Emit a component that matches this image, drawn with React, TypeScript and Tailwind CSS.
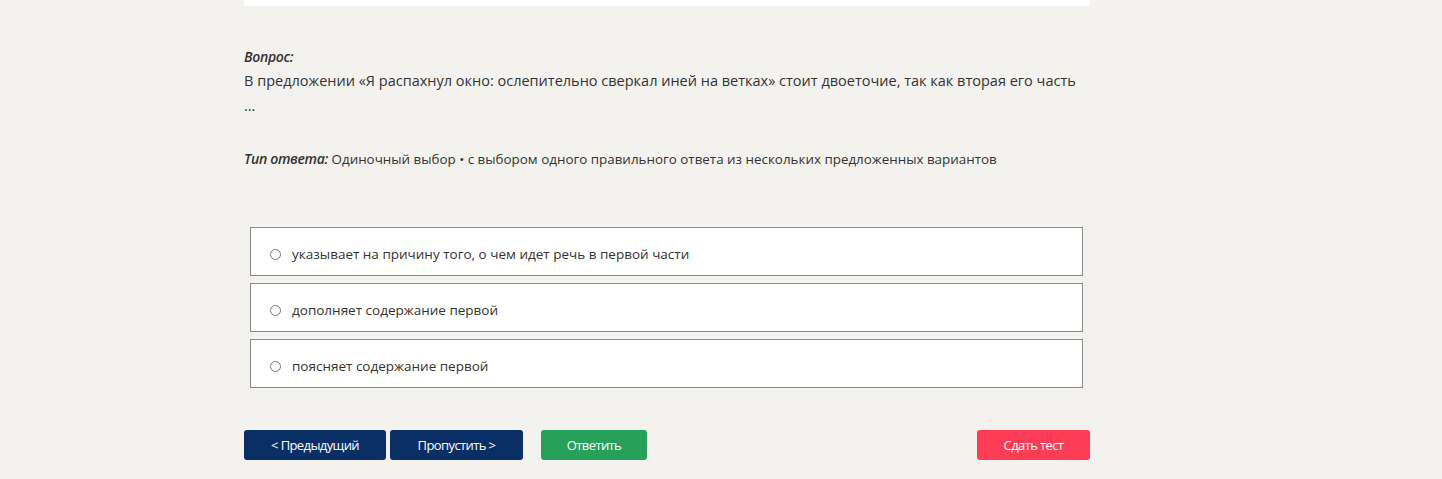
import { useState } from "react"

const OPTIONS = [
  "указывает на причину того, о чем идет речь в первой части",
  "дополняет содержание первой",
  "поясняет содержание первой",
]

export default function App() {
  const [picked, setPicked] = useState<number | null>(null)

  return (
    <main
      className="min-h-[479px] bg-[#f3f2ef] text-[#333333]"
      style={{ fontFamily: '"Open Sans", sans-serif' }}
    >
      <div className="ml-[244px] w-[846px]">
        {/* top card edge */}
        <div className="h-[6px] bg-white" />

        {/* Question */}
        <div className="pt-[40px] text-[14.5px] leading-[25px]">
          <p className="font-semibold italic text-[14px] leading-[22px] tracking-[-0.3px]">Вопрос:</p>
          <p>
            В предложении «Я распахнул окно: ослепительно сверкал иней на ветках» стоит двоеточие, так
            как вторая его часть ...
          </p>
        </div>

        <p className="mt-[31px] text-[13.4px] leading-[20px]">
          <span className="font-semibold italic text-[14px] tracking-[-0.3px]">Тип ответа:</span>{" "}
          Одиночный выбор • с выбором одного правильного ответа из нескольких предложенных вариантов
        </p>

        {/* Options */}
        <div className="mt-[58px] flex flex-col gap-[7px] pl-[6px] pr-[7px]">
          {OPTIONS.map((opt, i) => (
            <label
              key={opt}
              className="flex h-[49px] cursor-pointer items-center border border-[#8a8a8a] bg-white pl-[19px] pt-[5px] text-[13.5px]"
            >
              <input
                type="radio"
                name="answer"
                checked={picked === i}
                onChange={() => setPicked(i)}
                className="h-[11px] w-[11px] accent-[#8a8a8a]"
              />
              <span className="ml-[11px]">{opt}</span>
            </label>
          ))}
        </div>

        {/* Actions */}
        <div className="mt-[42px] flex items-center text-[13px] tracking-[-0.6px] text-white">
          <button className="h-[30px] w-[142px] rounded-[3px] bg-[#0a2f66] pt-[2px]">&lt; Предыдущий</button>
          <button className="ml-[4px] h-[30px] w-[133px] rounded-[3px] bg-[#0a2f66] pt-[2px]">
            Пропустить &gt;
          </button>
          <button className="ml-[18px] h-[30px] w-[106px] rounded-[3px] bg-[#27a15a] pt-[2px]">Ответить</button>
          <button className="ml-auto h-[30px] w-[113px] rounded-[3px] bg-[#fc3d55] pt-[2px]">Сдать тест</button>
        </div>
      </div>
    </main>
  )
}
